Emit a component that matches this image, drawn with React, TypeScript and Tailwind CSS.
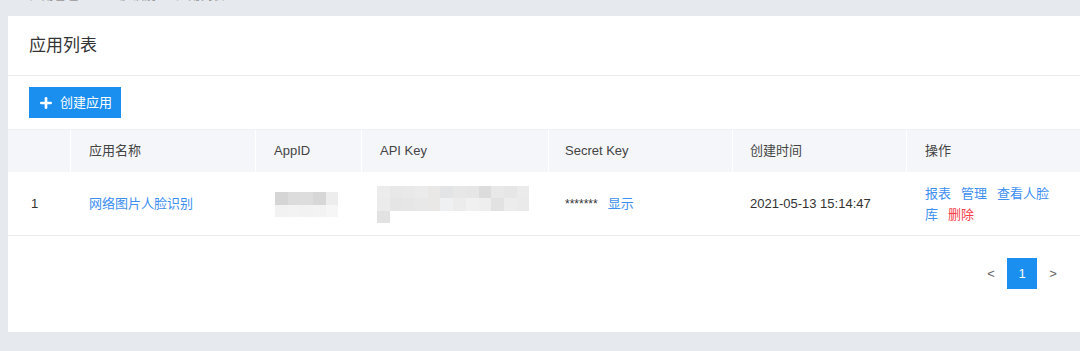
import { Plus } from 'lucide-react'

const appIdBlur = [
  ['bg-[#d5d5d5]', 'bg-[#dcdcdc]', 'bg-[#dddddd]', 'bg-[#d7d7d7]', 'bg-[#ededed]'],
  ['bg-[#f2f2f2]', 'bg-[#f3f3f3]', 'bg-[#f2f2f2]', 'bg-[#f3f3f3]', 'bg-[#f6f6f6]'],
]

const apiKeyBlur = [
  ['bg-[#ececec]', 'bg-[#e8e8e8]', 'bg-[#e9e9e9]', 'bg-[#ebebeb]', 'bg-[#e9e8e6]', 'bg-[#e2e4e6]', 'bg-[#e7e7e7]', 'bg-[#e6e6e6]', 'bg-[#dcdcdc]', 'bg-[#e8e8e8]', 'bg-[#e6e6e6]', 'bg-[#ebebeb]'],
  ['bg-[#ebebeb]', 'bg-[#e5e5e5]', 'bg-[#e6e6e6]', 'bg-[#e8e8e8]', 'bg-[#e9e8e6]', 'bg-[#eef0f2]', 'bg-[#ececec]', 'bg-[#f0f0f0]', 'bg-[#eeeeee]', 'bg-[#e2e2e2]', 'bg-[#ececec]', 'bg-[#eaeaea]'],
  ['bg-[#e2e2e2]'],
]

function Blur({ rows }: { rows: string[][] }) {
  return (
    <div className="flex flex-col">
      {rows.map((row, i) => (
        <div key={i} className="flex">
          {row.map((c, j) => (
            <div key={j} className={`w-[12.7px] h-[12.5px] ${c}`} />
          ))}
        </div>
      ))}
    </div>
  )
}

export default function App() {
  const cols = [
    { label: '', w: 'w-[63px]', pad: 'pl-[23px]' },
    { label: '应用名称', w: 'w-[185px]', pad: 'pl-[18px]' },
    { label: 'AppID', w: 'w-[106px]', pad: 'pl-[18px]' },
    { label: 'API Key', w: 'w-[187px]', pad: 'pl-[18px]' },
    { label: 'Secret Key', w: 'w-[184px]', pad: 'pl-[16px]' },
    { label: '创建时间', w: 'w-[174px]', pad: 'pl-[17px]' },
    { label: '操作', w: 'flex-1', pad: 'pl-[18px]' },
  ]

  return (
    <div
      className="w-[1080px] h-[351px] bg-[#e6e9ed] overflow-hidden text-[#333]"
      style={{ fontFamily: '"Liberation Sans", "Noto Sans CJK SC", sans-serif' }}
    >
      {/* 面包屑 */}
      <div className="h-4 overflow-hidden pl-[3px]">
        <div className="-mt-[12px] text-xs text-[#999] flex gap-5">
          <span>&lt;</span>
          <span>应用管理</span>
          <span>&gt; 人脸识别</span>
          <span>应用列表</span>
        </div>
      </div>

      <div className="ml-2 bg-white h-[316px] flex flex-col">
        {/* 标题 */}
        <div className="h-[60px] flex items-center pl-[21px] border-b border-[#e8eaec]">
          <h1 className="text-[17px] text-[#333]">应用列表</h1>
        </div>

        {/* 创建按钮 */}
        <div className="pl-[21px] pt-[11px] pb-[11px]">
          <button className="w-[92px] h-[31px] bg-[#1a8ff0] text-white text-[13px] flex items-center justify-center gap-[6px]">
            <Plus size={16} strokeWidth={4} />
            <span>创建应用</span>
          </button>
        </div>

        {/* 表格 */}
        <div className="text-[13px]">
          <div className="flex h-[43px] bg-[#f5f6fa] border-t border-[#eef0f3] text-[#444]">
            {cols.map((c, i) => (
              <div
                key={i}
                className={`${c.w} ${c.pad} flex items-center ${i < cols.length - 1 ? 'border-r border-white' : ''}`}
              >
                {c.label}
              </div>
            ))}
          </div>

          <div className="flex h-[64px] items-center border-b border-[#e9eaec]">
            <div className="w-[63px] pl-[23px]">1</div>
            <div className="w-[185px] pl-[18px] text-[#3d8ff0]">网络图片人脸识别</div>
            <div className="w-[106px] pl-[19px] pt-[2px]">
              <Blur rows={appIdBlur} />
            </div>
            <div className="w-[187px] pl-[15px] pt-[2px]">
              <Blur rows={apiKeyBlur} />
            </div>
            <div className="w-[184px] pl-[16px] flex items-center gap-[10px]">
              <span className="text-[12px]">*******</span>
              <span className="text-[#3d8ff0]">显示</span>
            </div>
            <div className="w-[174px] pl-[17px]">2021-05-13 15:14:47</div>
            <div className="flex-1 pl-[18px]">
              <div className="w-[130px] leading-[21px] text-[#3d8ff0]">
                <span className="mr-[10px]">报表</span>
                <span className="mr-[10px]">管理</span>
                <span className="mr-[10px]">查看人脸库</span>
                <span className="text-[#f5404a]">删除</span>
              </div>
            </div>
          </div>

          {/* 分页 */}
          <div className="flex justify-end items-center mt-[22px] pr-[12px] text-[#666]">
            <span className="w-[30px] text-center text-[13px]">&lt;</span>
            <span className="w-[30px] h-[31px] bg-[#1a8ff0] text-white flex items-center justify-center mx-[1px]">1</span>
            <span className="w-[30px] text-center text-[13px]">&gt;</span>
          </div>
        </div>
      </div>
    </div>
  )
}
